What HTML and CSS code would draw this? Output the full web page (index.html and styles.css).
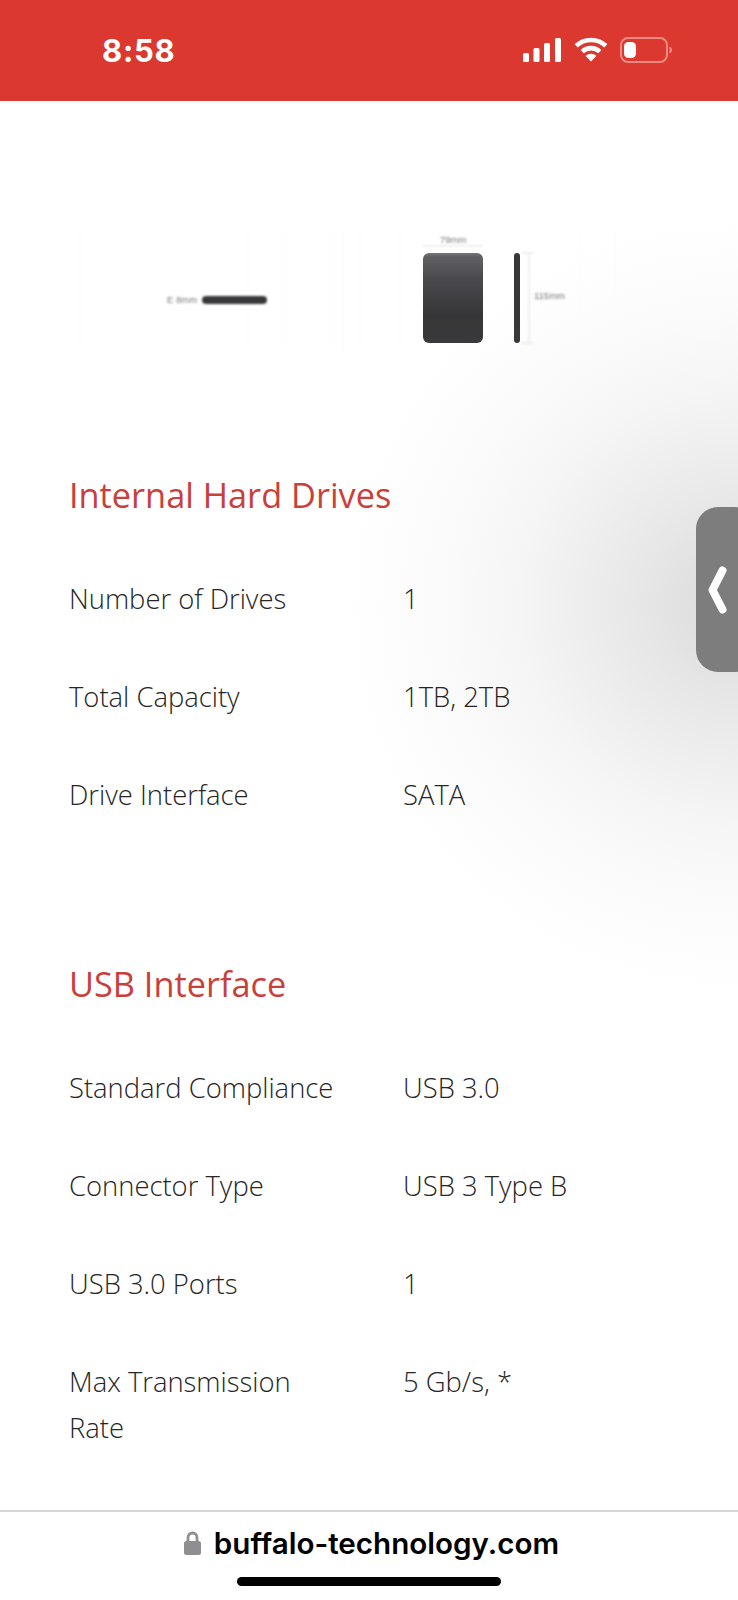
FILE: index.html
```html
<!DOCTYPE html>
<html lang="en">
<head>
<meta charset="utf-8">
<title>Buffalo drive specifications</title>
<link rel="stylesheet" href="styles.css">
</head>
<body>
<div class="page">
  <div class="side-glow"></div>
  <header class="status">
    <span class="time">8:58</span>
    <div class="status-icons">
      <svg class="signal" viewBox="0 0 38 24"><rect x="0" y="15" width="6" height="9" rx="1.5"/><rect x="10.5" y="10" width="6" height="14" rx="1.5"/><rect x="21" y="5" width="6" height="19" rx="1.5"/><rect x="32" y="0" width="6" height="24" rx="1.5"/></svg>
      <svg class="wifi" viewBox="0 0 34 25"><path d="M2.2 8.8C10.5 1 23.500 1 31.800 8.800"/><path d="M8.200 14.600C13.200 10 20.800 10 25.800 14.600"/><path class="wifi-tip" d="M17 24.500L11.600 18.900C14.700 16.100 19.300 16.100 22.400 18.900Z"/></svg>
      <svg class="battery" viewBox="0 0 52 26"><rect class="battery-shell" x="1" y="1" width="46" height="24" rx="7"/><path class="battery-nub" d="M49.500 9.500c1.600.4 2.500 1.800 2.500 3.500s-.9 3.100-2.500 3.500z"/><rect class="battery-fill" x="4" y="5" width="12" height="16" rx="4.500"/></svg>
    </div>
  </header>

  <main class="content">
    <figure class="diagram">
      <svg viewBox="0 101 738 364" width="738" height="364">
        <defs>
          <filter id="soft" x="-20%" y="-20%" width="140%" height="140%"><feGaussianBlur stdDeviation="1"/></filter>
          <filter id="softer" x="-20%" y="-20%" width="140%" height="140%"><feGaussianBlur stdDeviation="0.7"/></filter>
          <linearGradient id="face" x1="0" y1="0" x2="0" y2="1">
            <stop offset="0" stop-color="#77777c"/>
            <stop offset="0.04" stop-color="#606065"/>
            <stop offset="0.3" stop-color="#49494d"/>
            <stop offset="0.7" stop-color="#363638"/>
            <stop offset="1" stop-color="#3a3a3c"/>
          </linearGradient>
        </defs>
        <g class="ghost-lines">
          <path d="M80 232V348M248 232V348M282 228V350M330 228V350M343 228V350M360 228V350M400 228V350M580 232V348M615 232V348"/>
        </g>
        <g filter="url(#soft)">
          <text class="dim" x="167" y="303">E 8mm</text>
          <rect x="202" y="296" width="65" height="8" rx="4" class="drive-dark"/>
          <path class="dim-line" d="M422 246H483M529 253V343M521 253H534M521 343H534"/>
          <text class="dim" x="440" y="243">79mm</text>
          <text class="dim" x="534" y="299">115mm</text>
        </g>
        <g filter="url(#softer)">
          <rect x="423" y="253" width="60" height="90" rx="6" fill="url(#face)"/>
          <rect x="514" y="253" width="6" height="90" rx="3" class="drive-dark"/>
        </g>
      </svg>
    </figure>

    <section class="spec">
      <h2 class="spec-title">Internal Hard Drives</h2>
      <dl class="spec-table">
        <dt>Number of Drives</dt><dd>1</dd>
        <dt>Total Capacity</dt><dd>1TB, 2TB</dd>
        <dt>Drive Interface</dt><dd>SATA</dd>
      </dl>
    </section>

    <section class="spec">
      <h2 class="spec-title">USB Interface</h2>
      <dl class="spec-table">
        <dt>Standard Compliance</dt><dd>USB 3.0</dd>
        <dt>Connector Type</dt><dd>USB 3 Type B</dd>
        <dt>USB 3.0 Ports</dt><dd>1</dd>
        <dt>Max Transmission Rate</dt><dd>5 Gb/s, *</dd>
      </dl>
    </section>
  </main>

  <footer class="browser-bar">
    <div class="url">
      <svg class="lock" viewBox="0 0 17 24"><path class="lock-shackle" d="M4 11V6.500a4.500 4.500 0 0 1 9 0V11"/><rect x="0" y="10" width="17" height="14" rx="2.500"/></svg>
      <span>buffalo-technology.com</span>
    </div>
    <div class="home-indicator"></div>
  </footer>

  <button class="side-tab" aria-label="Open panel">
    <svg viewBox="0 0 19 48"><path d="M14.500 4.500L4.500 24L14.500 43.500"/></svg>
  </button>
</div>
</body>
</html>
```

FILE: styles.css
```css
* { box-sizing: border-box; }
html, body { margin: 0; padding: 0; background: #fff; }
.page {
  position: relative;
  width: 738px;
  height: 1600px;
  overflow: hidden;
  display: flex;
  flex-direction: column;
  font-family: "Open Sans", "Liberation Sans", sans-serif;
}

/* soft shadow that surrounds the side tab */
.side-glow {
  position: absolute;
  top: 210px;
  left: 338px;
  width: 800px;
  height: 790px;
  border-radius: 50%;
  background: radial-gradient(closest-side,
    #d9d9d9 0%, #e0e0e0 12%, #e7e7e7 25%, #eeeeee 40%, #f5f5f5 55%, #fafafa 72%, #fdfdfd 88%, #fff 100%);
}

/* status bar */
.status {
  position: relative;
  height: 101px;
  flex: none;
  background: #db3830;
  color: #fff;
  display: flex;
  align-items: flex-start;
  justify-content: space-between;
  padding: 32px 66px 0 102px;
}
.time {
  font-family: Inter, "Liberation Sans", sans-serif;
  font-weight: 700;
  font-size: 31px;
  line-height: 37px;
  letter-spacing: 0.7px;
}
.status-icons { display: flex; align-items: flex-start; padding-top: 5px; }
.signal { width: 38px; height: 24px; fill: #fff; margin-top: 1px; }
.wifi { width: 34px; height: 25px; margin-left: 13px; fill: none; stroke: #fff; stroke-width: 4.600; }
.wifi-tip { fill: #fff; stroke: none; }
.battery { width: 52px; height: 26px; margin-left: 12px; }
.battery-shell { fill: none; stroke: #ee8a84; stroke-width: 2; }
.battery-nub { fill: #ee8a84; }
.battery-fill { fill: #fff; }

/* content */
.content { position: relative; flex: 1; min-height: 0; }
.diagram { margin: 0; height: 364px; }
.diagram svg { display: block; }
.ghost-lines path { stroke: #fbfbfb; stroke-width: 1; fill: none; }
.dim { font-family: "Liberation Sans", sans-serif; font-size: 9.500px; fill: #777; }
.dim-line { stroke: #e2e2d8; stroke-width: 1; fill: none; }
.drive-dark { fill: #38383a; }

.spec { padding-left: 69px; margin-bottom: 110px; }
.spec-title {
  margin: 0 0 25px;
  font-size: 34.300px;
  line-height: 60px;
  font-weight: 400;
  color: #c9403b;
}
.spec-table {
  margin: 0;
  display: grid;
  grid-template-columns: 334px 1fr;
  font-size: 27.400px;
  line-height: 46px;
  font-weight: 300;
  color: #262626;
}
.spec-table dt { padding: 26px 60px 26px 0; }
.spec-table dd { margin: 0; padding: 26px 0; }

/* browser bar */
.browser-bar {
  position: relative;
  flex: none;
  height: 90px;
  background: #fff;
  border-top: 2px solid #d6d6d6;
  padding-top: 12px;
}
.url {
  display: flex;
  justify-content: center;
  align-items: center;
  height: 38px;
  gap: 13px;
  font-family: Inter, "Liberation Sans", sans-serif;
  font-weight: 600;
  font-size: 29.600px;
  color: #000;
  padding-left: 5px;
}
.lock { width: 17px; height: 24px; fill: #8e8e93; }
.lock-shackle { fill: none; stroke: #8e8e93; stroke-width: 2.800; }
.home-indicator {
  width: 264px;
  height: 9px;
  border-radius: 5px;
  background: #000;
  margin: 15px 0 0 237px;
}

/* side tab */
.side-tab {
  position: absolute;
  top: 507px;
  left: 696px;
  width: 60px;
  height: 165px;
  padding: 0;
  border: 0;
  border-radius: 22px;
  background: #7d7d7d;
  display: flex;
  align-items: center;
}
.side-tab svg {
  width: 19px;
  height: 48px;
  margin-left: 12px;
  fill: none;
  stroke: #fff;
  stroke-width: 8;
  stroke-linecap: round;
  stroke-linejoin: round;
}
```
